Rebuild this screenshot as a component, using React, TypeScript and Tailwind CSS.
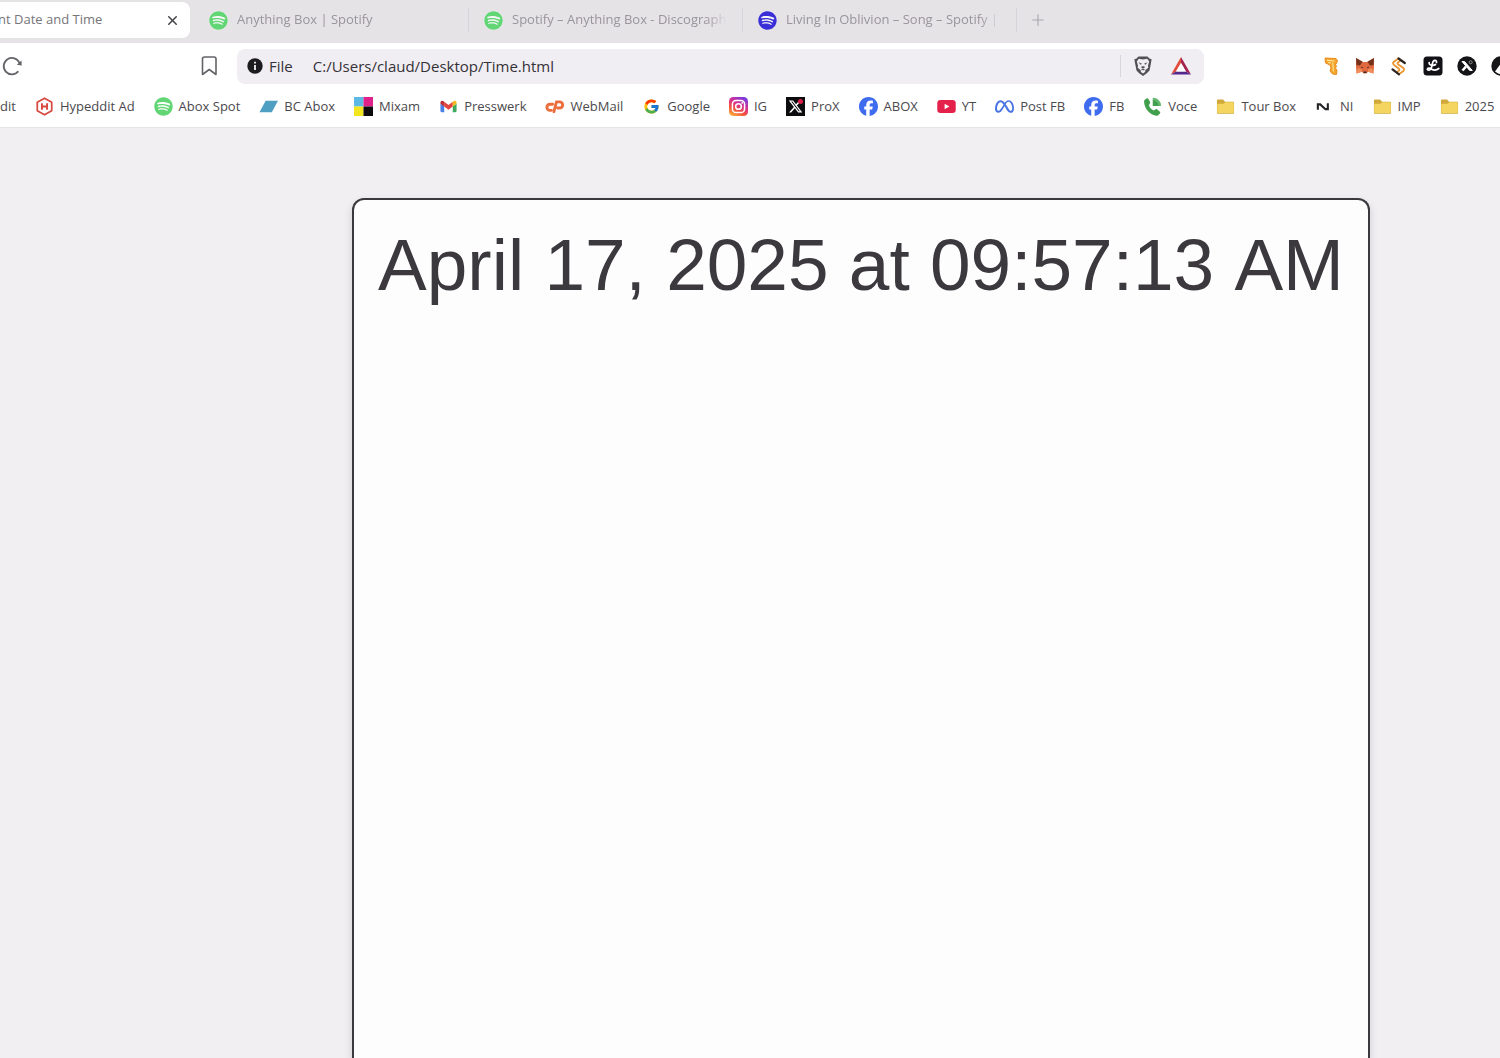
import type { ReactNode } from "react";
import { FaFacebook, FaSpotify, FaXTwitter } from "react-icons/fa6";
import { FcGoogle } from "react-icons/fc";
import { SiMeta } from "react-icons/si";
import { Plus, X } from "lucide-react";

interface BookmarkItem {
    label: string;
    icon?: ReactNode;
}

interface TabItem {
    title: string;
    color: string;
}

const SpotifyIcon = ({ color }: { color: string }) => (
    <span className="flex w-[19px] h-[19px] shrink-0 rounded-full bg-white/70">
        <FaSpotify className={`w-[19px] h-[19px] ${color}`} />
    </span>
);

const HypedditIcon = () => (
    <svg viewBox="0 0 20 20" className="w-[19px] h-[19px]" fill="none" stroke="#d8483f">
        <path d="M10 1.2 17.6 5.4V14.6L10 18.8 2.4 14.6V5.4Z" strokeWidth="1.8" strokeLinejoin="round" />
        <path d="M7.3 6.5V13.5M12.7 6.5V13.5M7.3 10H12.7" strokeWidth="2" />
    </svg>
);

const BandcampIcon = () => (
    <svg viewBox="0 0 20 20" className="w-[19px] h-[19px]">
        <path d="M7 4H20L13.5 16H0.5Z" fill="#4f9fc2" />
    </svg>
);

const MixamIcon = () => (
    <svg viewBox="0 0 18 18" className="w-[19px] h-[19px]">
        <path d="M0 0H9V9H0Z" fill="#5cb8e4" />
        <path d="M9 0H18V9H9Z" fill="#e0218a" />
        <path d="M0 9H9V18H0Z" fill="#f3e51f" />
        <path d="M9 9H18V18H9Z" fill="#0d0b0d" />
    </svg>
);

const GmailIcon = () => (
    <svg viewBox="0 0 20 20" className="w-[19px] h-[19px]">
        <path d="M1.5 7V14.8Q1.5 16 2.7 16H5.5V9.8Z" fill="#4a80e8" />
        <path d="M14.5 9.8V16H17.3Q18.5 16 18.5 14.8V7Z" fill="#41a85f" />
        <path d="M5.5 5 10 8.5 14.5 5V10L10 13.4 5.5 10Z" fill="#e2453b" />
        <path d="M1.5 6Q1.5 4 3.3 4 4.2 4 5.5 5V10L1.5 7Z" fill="#bf2f35" />
        <path d="M18.5 6Q18.5 4 16.7 4 15.8 4 14.5 5V10L18.5 7Z" fill="#f4b921" />
    </svg>
);

const CpanelIcon = () => (
    <svg viewBox="0 0 20 20" className="w-[19px] h-[19px]" fill="none" stroke="#ec6d3c" strokeWidth="3" strokeLinecap="round" strokeLinejoin="round">
        <path d="M8 7.6H5.2A3.200 3.200 0 0 0 5.2 14H6.8" />
        <path d="M9.4 15.5 12 5.2H15.4A3.200 3.200 0 0 1 15.4 11.6H13.3" />
    </svg>
);

const InstagramIcon = () => (
    <svg viewBox="0 0 20 20" className="w-[19px] h-[19px]">
        <defs>
            <linearGradient id="ig" x1="0.15" y1="1" x2="0.7" y2="0">
                <stop offset="0" stopColor="#fbb03b" />
                <stop offset="0.35" stopColor="#f2513f" />
                <stop offset="0.65" stopColor="#d72f93" />
                <stop offset="1" stopColor="#7a3be0" />
            </linearGradient>
        </defs>
        <rect width="20" height="20" rx="4.5" fill="url(#ig)" />
        <g fill="none" stroke="#fff" strokeWidth="1.6">
            <rect x="3.6" y="3.6" width="12.8" height="12.8" rx="3.8" />
            <circle cx="10" cy="10" r="3" />
        </g>
        <circle cx="13.9" cy="6.2" r="0.9" fill="#fff" />
    </svg>
);

const ProXIcon = () => (
    <span className="relative flex items-center justify-center w-[19px] h-[19px] bg-[#0c0b0d]">
        <FaXTwitter className="w-[15px] h-[15px] text-white" />
        <span className="absolute top-0.5 right-0.5 w-[5px] h-[5px] rounded-full bg-[#d81f4b]" />
    </span>
);

const YoutubeIcon = () => (
    <svg viewBox="0 0 20 20" className="w-[19px] h-[19px]">
        <rect x="0.3" y="3.2" width="19.4" height="13.6" rx="3.4" fill="#e3214b" />
        <path d="M8 7.2 13 10 8 12.8Z" fill="#fff" />
    </svg>
);

const VoiceIcon = () => (
    <svg viewBox="0 0 24 24" className="w-[19px] h-[19px]" fill="#41a04e">
        <path d="M7.5 10.5C8.5 13.5 10.5 15.8 13.5 17.2L16 15.5C16.6 15.1 17.2 15.2 17.7 15.6L21.3 18.6C21.9 19.1 22 19.9 21.5 20.5L19.6 22.7C19 23.4 18.2 23.7 17.3 23.6 8.5 22.3 1.8 15 1.3 5.6 1.3 4.8 1.6 4 2.3 3.5L4.8 1.7C5.5 1.2 6.3 1.4 6.7 2.1L9 6.2C9.3 6.8 9.2 7.5 8.8 8Z" />
        <path d="M12.3 1A10 10 0 0 1 22.8 11.3H19.3A7 7 0 0 0 12.3 4.5Z" fill="#66b86e" />
        <path d="M12.3 3.8A7.5 7.5 0 0 1 19.8 11.3H12.3Z" />
    </svg>
);

const FolderIcon = () => (
    <svg viewBox="0 0 20 20" className="w-[19px] h-[19px]">
        <path d="M1 3.5Q1 2.5 2 2.5H7.5L9.5 5H18Q19 5 19 6V16.5Q19 17.5 18 17.5H2Q1 17.5 1 16.5Z" fill="#d0a93a" />
        <path d="M1.3 8Q1.3 7 2.3 7H7.8L9.8 5.6H17.7Q18.7 5.6 18.7 6.6V15.8Q18.7 16.8 17.7 16.8H2.3Q1.3 16.8 1.3 15.8Z" fill="#f3d55f" />
    </svg>
);

const NIIcon = () => (
    <svg viewBox="0 0 20 20" className="w-[19px] h-[19px]" fill="none" stroke="#242226" strokeWidth="2.2">
        <path d="M3 13.5V7.8H5.5L11 12.8H13.5V6.5" />
    </svg>
);

const ShieldsIcon = () => (
    <svg viewBox="0 0 20 22" className="w-5 h-[22px]">
        <path d="M5.5 1.5H14.5L16.5 3.5 18.6 4.2 18 8 16.5 15.5 13.5 18.5 10 21 6.5 18.5 3.5 15.5 2 8 1.4 4.2 3.5 3.5Z" fill="#515055" />
        <path d="M5.800 3.800 10 4.600 14.200 3.800 16.200 6.500 15 10.500 15.300 12.800 12.500 15 12 17 10 18.400 8 17 7.500 15 4.700 12.800 5 10.500 3.800 6.500Z" fill="#f0edf3" />
        <path d="M5.500 7.200 9 8.700 7.500 9.800ZM14.500 7.200 11 8.700 12.500 9.800ZM10 13.800 7.800 12 9.400 11.300H10.600L12.200 12ZM7.500 15 10 13.800 12.500 15 10 15.200Z" fill="#515055" />
    </svg>
);

const BatIcon = () => (
    <svg viewBox="0 0 22 20" className="w-[22px] h-5">
        <path d="M11 1 1 18.5 6 15.5 11 7Z" fill="#e24c3a" />
        <path d="M11 1 21 18.5 16 15.5 11 7Z" fill="#a3224f" />
        <path d="M1 18.5H21L16 15.5H6Z" fill="#54278c" />
        <path d="M11 7 16 15.5H6Z" fill="#fff" />
    </svg>
);

const extensions = [
    {
        name: "Ticket tool",
        icon: (
            <svg viewBox="0 0 20 20" className="w-5 h-5" strokeLinejoin="round">
                <path d="M4 2 15 2.5 16.5 4.500 15.5 7.5 14 8 15.5 10 14.5 12 16 14.5 15.5 18.5 11.5 18 9 15 10 12 9 9 4.5 7Z" fill="#f3a62a" stroke="#e98c22" />
                <path d="M6 4.3 13.5 5M11.8 6.5 12.3 15.5M7 6.5 10 7" stroke="#ffe9a8" fill="none" />
            </svg>
        ),
    },
    {
        name: "MetaMask",
        icon: (
            <svg viewBox="0 0 20 20" className="w-5 h-5">
                <path d="M1 2 8 6H12L19 2V10L18.5 17.5 13 15.8 11.5 17.5H8.5L7 15.8 1.5 17.5 1 10Z" fill="#e0693f" />
                <path d="M1 2 7.5 5.8 5 9.5 1.5 9ZM19 2 12.5 5.8 15 9.5 18.5 9Z" fill="#74321d" />
                <path d="M1.5 17.5 3 12 7 13.5 7 15.8ZM18.5 17.5 17 12 13 13.5 13 15.8Z" fill="#f08f5c" />
                <path d="M6 10.5 8.3 11.5 6.8 12.3ZM14 10.5 11.7 11.5 13.2 12.3ZM8.5 15.5H11.5V17H8.5Z" fill="#3b2a2a" />
            </svg>
        ),
    },
    {
        name: "SurferSEO",
        icon: (
            <svg viewBox="0 0 20 20" className="w-5 h-5" fill="none" strokeLinecap="round" strokeLinejoin="round">
                <path d="M9.5 2.5 4.8 5.8Q3.2 7.2 4.8 8.7L10 12.8Q11 13.8 9.8 14.8L8.5 15.5" stroke="#e9962e" strokeWidth="1.8" />
                <path d="M11 5 9 6.5Q8 7.5 9 8.3L14.3 12Q15.8 13.5 14.3 15L10 18.3" stroke="#e9962e" strokeWidth="1.8" />
                <path d="M9.5 2.5 15.8 7M3.5 13.3 10 18.3" stroke="#2b2320" strokeWidth="2.2" />
            </svg>
        ),
    },
    {
        name: "Linkfire",
        icon: (
            <svg viewBox="0 0 20 20" className="w-5 h-5" fill="none" strokeLinecap="round">
                <rect x="0.5" y="0.5" width="19" height="19" rx="3.5" fill="#121115" />
                <path d="M13.5 6.5C14 3.5 10 3.5 9.5 7.5 9 10.5 8 14.3 5.5 14.2 3.8 14 4 12 6 12.2 9 12.5 11 16.5 15.8 12.5M6.2 6.5C5.5 9.5 10.5 10 12.5 8.5" stroke="#fff" strokeWidth="1.7" />
            </svg>
        ),
    },
    {
        name: "Xverse",
        icon: (
            <svg viewBox="0 0 20 20" className="w-5 h-5" fill="none">
                <circle cx="10" cy="10" r="9.7" fill="#151417" />
                <path d="M5 5.5H7.5L15.3 14.5H12.7Z" fill="#fff" stroke="#fff" />
                <path d="M9 10.5 5.5 14.5" stroke="#fff" strokeWidth="2.6" />
                <circle cx="13.7" cy="6.3" r="1.5" stroke="#8d8b90" />
            </svg>
        ),
    },
    {
        name: "Wallet",
        icon: (
            <svg viewBox="0 0 20 20" className="w-5 h-5">
                <circle cx="10" cy="10" r="9.7" fill="#151417" />
                <path d="M4 15.5 9.5 8 13 12V17L8 18Z" fill="#fff" />
            </svg>
        ),
    },
];

const tabs: TabItem[] = [
    { title: "Anything Box | Spotify", color: "text-[#62d675]" },
    { title: "Spotify – Anything Box - Discography", color: "text-[#62d675]" },
    { title: "Living In Oblivion – Song – Spotify |", color: "text-[#3a2ed6]" },
];

const bookmarks: BookmarkItem[] = [
    { label: "Hypeddit Ad", icon: <HypedditIcon /> },
    { label: "Abox Spot", icon: <SpotifyIcon color="text-[#62d675]" /> },
    { label: "BC Abox", icon: <BandcampIcon /> },
    { label: "Mixam", icon: <MixamIcon /> },
    { label: "Presswerk", icon: <GmailIcon /> },
    { label: "WebMail", icon: <CpanelIcon /> },
    { label: "Google", icon: <FcGoogle className="w-[17px] h-[17px]" /> },
    { label: "IG", icon: <InstagramIcon /> },
    { label: "ProX", icon: <ProXIcon /> },
    { label: "ABOX", icon: <FaFacebook className="w-[19px] h-[19px] text-[#3f6cee]" /> },
    { label: "YT", icon: <YoutubeIcon /> },
    { label: "Post FB", icon: <SiMeta className="w-[19px] h-[19px] text-[#4a74e4]" /> },
    { label: "FB", icon: <FaFacebook className="w-[19px] h-[19px] text-[#3f6cee]" /> },
    { label: "Voce", icon: <VoiceIcon /> },
    { label: "Tour Box", icon: <FolderIcon /> },
    { label: "NI", icon: <NIIcon /> },
    { label: "IMP", icon: <FolderIcon /> },
    { label: "2025", icon: <FolderIcon /> },
];

export default function App() {
    return (
        <div className="flex flex-col min-h-screen overflow-hidden bg-[#f1eff2] font-['Open_Sans',sans-serif]">
            <nav className="flex items-center h-[43px] pb-[3px] bg-[#e6e3e7] text-[13px] text-[#98959b]">
                <div className="flex items-center justify-between w-[190px] h-9 pr-2.5 mr-1 shrink-0 rounded-r-lg bg-white">
                    <a href="#" className="-ml-0.5 text-[#77757a] whitespace-nowrap">nt Date and Time</a>
                    <button aria-label="Close tab">
                        <X className="w-[15px] h-[15px] text-[#49474c]" strokeWidth={2.5} />
                    </button>
                </div>
                {tabs.map((tab) => (
                    <div key={tab.title} className="flex items-center w-[274px] h-6 pl-[15px] pr-2.5 shrink-0 [&+&]:border-l [&+&]:border-[#d8d5da]">
                        <a href="#" className="flex items-center gap-[9px] w-full min-w-0">
                            <SpotifyIcon color={tab.color} />
                            <span className="flex-1 overflow-hidden whitespace-nowrap [mask-image:linear-gradient(to_right,black_88%,transparent_98%)]">
                                {tab.title}
                            </span>
                        </a>
                    </div>
                ))}
                <div className="flex items-center h-6 pl-3 border-l border-[#d8d5da]">
                    <button aria-label="New tab">
                        <Plus className="w-[18px] h-[18px] text-[#aaa7ad]" strokeWidth={1.5} />
                    </button>
                </div>
            </nav>

            <header className="bg-white border-b border-[#e6e4e8]">
                <div className="flex items-center h-[46px]">
                    <button aria-label="Reload">
                        <svg viewBox="0 0 24 24" className="w-6 h-6" fill="none" stroke="#656368" strokeWidth="1.8">
                            <path d="M18.3 17.3A8.2 8.2 0 1 1 19.5 9" />
                            <path d="M21.5 6.5 21.7 11.5 16.8 10.8Z" fill="#656368" stroke="none" />
                        </svg>
                    </button>
                    <button aria-label="Bookmark this page" className="ml-[175px]">
                        <svg viewBox="0 0 20 22" className="w-5 h-[22px]" fill="none" stroke="#656368" strokeWidth="1.6" strokeLinejoin="round">
                            <path d="M3.5 4Q3.5 2 5.5 2H15Q17 2 17 4V19.5L10.25 14.5 3.5 19.5Z" />
                        </svg>
                    </button>
                    <div className="flex flex-1 items-center min-w-0 h-[35px] ml-[18px] pl-2.5 pr-3 rounded-lg bg-[#f0edf3] text-[15px] text-[#343236]">
                        <svg viewBox="0 0 16 16" className="w-4 h-4 shrink-0">
                            <circle cx="8" cy="8" r="7.7" fill="#1c1b1e" />
                            <path d="M8 7V12M8 3.8V5.5" stroke="#fff" strokeWidth="1.7" />
                        </svg>
                        <label htmlFor="address" className="ml-1.5">File</label>
                        <input
                            id="address"
                            defaultValue="C:/Users/claud/Desktop/Time.html"
                            className="flex-1 min-w-0 ml-5 bg-transparent outline-none"
                        />
                        <div className="flex items-center gap-[17px] pl-3 border-l border-[#d9d5dd]">
                            <button aria-label="Brave Shields">
                                <ShieldsIcon />
                            </button>
                            <button aria-label="Brave Rewards">
                                <BatIcon />
                            </button>
                        </div>
                    </div>
                    <div className="flex items-center gap-3.5 ml-[117px] -mr-[11px]">
                        {extensions.map((ext) => (
                            <button key={ext.name} aria-label={ext.name}>{ext.icon}</button>
                        ))}
                    </div>
                </div>

                <div className="flex items-center gap-[19px] h-[38px] pb-[3px] overflow-hidden text-[13px] text-[#4b494e] whitespace-nowrap">
                    <a href="#">dit</a>
                    {bookmarks.map((item, i) => (
                        <a key={i} href="#" className="flex items-center gap-1.5 shrink-0">
                            <span className="flex items-center justify-center w-[19px] h-[19px]">{item.icon}</span>
                            {item.label}
                        </a>
                    ))}
                </div>
            </header>

            <main className="flex flex-1 justify-center pt-[70px] pl-[222px]">
                <section className="px-6 pt-6 border-2 border-b-0 border-[#3b393d] rounded-t-xl bg-[#fefdfe] shadow-[0_4px_8px_rgba(0,0,0,0.15)]">
                    <h1 className="font-['Liberation_Sans',sans-serif] text-[73px] leading-[82px] text-[#3b393d] whitespace-nowrap [font-kerning:none]">
                        April 17, 2025 at 09:57:13 AM
                    </h1>
                </section>
            </main>
        </div>
    );
}
